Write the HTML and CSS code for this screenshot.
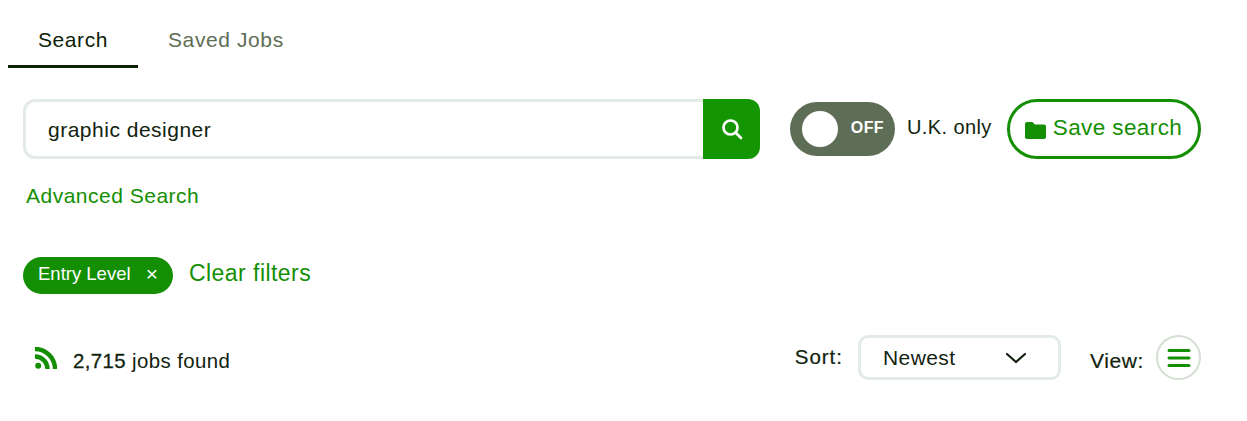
FILE: index.html
```html
<!DOCTYPE html>
<html lang="en">
<head>
    <meta charset="UTF-8">
    <title>Job Search</title>
    <link rel="stylesheet" href="styles.css">
</head>
<body>

    <!-- Tabs -->
    <nav class="tabs">
        <a class="tab active">Search</a>
        <a class="tab">Saved Jobs</a>
    </nav>

    <!-- Search row -->
    <div class="search-row">
        <div class="search-box">
            <div class="search-input">graphic designer</div>
            <button class="search-btn">
                <svg width="24" height="24" viewBox="0 0 24 24" fill="none" stroke="#fff" stroke-width="2.700" stroke-linecap="round">
                    <circle cx="10.5" cy="10.5" r="7"/>
                    <path d="M15.8 15.8 21 21"/>
                </svg>
            </button>
        </div>
        <div class="toggle">
            <span class="knob"></span>
            <span class="toggle-label">OFF</span>
        </div>
        <span class="toggle-text">U.K. only</span>
        <button class="save-btn">
            <svg width="21" height="17" viewBox="0 0 21 17" fill="#148f04">
                <path d="M0 2C0 .9.9 0 2 0h5.500l2.500 2.500h9c1.100 0 2 .9 2 2V15c0 1.100-.9 2-2 2H2c-1.100 0-2-.9-2-2z"/>
            </svg>
            <span class="save-text">Save search</span>
        </button>
    </div>

    <a class="advanced">Advanced Search</a>

    <!-- Filters -->
    <div class="filters">
        <span class="chip">Entry Level <span class="chip-x">×</span></span>
        <a class="clear">Clear filters</a>
    </div>

    <!-- Results bar -->
    <div class="results">
        <div class="found">
            <svg width="22" height="22" viewBox="0 0 22 22" fill="none" stroke="#148f04" stroke-width="4.400">
                <circle cx="3.200" cy="18.800" r="3" fill="#148f04" stroke="none"/>
                <path d="M0 9.500a12.500 12.500 0 0 1 12.500 12.500"/>
                <path d="M0 2a20 20 0 0 1 20 20"/>
            </svg>
            <span class="found-text"><b>2,715</b> jobs found</span>
        </div>
        <div class="sort">
            <span class="sort-label">Sort:</span>
            <div class="select">
                Newest
                <svg width="24" height="14" viewBox="0 0 24 14" fill="none" stroke="#12230f" stroke-width="2.200" stroke-linecap="round">
                    <path d="M3 3l9 8 9-8"/>
                </svg>
            </div>
            <span class="view-label">View:</span>
            <div class="view-btn">
                <svg width="24" height="20" viewBox="0 0 24 20" fill="none" stroke="#148f04" stroke-width="3" stroke-linecap="round">
                    <path d="M2 2.500h20M2 10h20M2 17.500h20"/>
                </svg>
            </div>
        </div>
    </div>

</body>
</html>
```

FILE: styles.css
```css
/* Page */
body {
    margin: 0;
    padding: 0 46px 0 8px;
    background-color: #fff;
    color: #12230f;
    font-family: 'Liberation Sans', Arial, sans-serif;
    font-size: 20px;
    letter-spacing: 0.4px;
}

a {
    cursor: pointer;
}

/* Tabs */
.tabs {
    display: flex;
    padding-top: 12px;
}

.tab {
    width: 130px;
    height: 53px;
    line-height: 56px;
    text-align: center;
    font-size: 21px;
    letter-spacing: 0.6px;
    color: #5e6d55;
}

.tab.active {
    color: #0d2106;
    border-bottom: 3px solid #0d2106;
}

.tab + .tab {
    margin-left: 30px;
    width: auto;
}

/* Search row */
.search-row {
    display: flex;
    align-items: center;
    margin: 31px 0 0 15px;
}

.search-box {
    display: flex;
    width: 737px;
    height: 60px;
}

.search-input {
    flex: 1;
    box-sizing: border-box;
    padding-left: 22px;
    line-height: 56px;
    font-size: 21px;
    letter-spacing: 0.5px;
    border: 3px solid #e4ebe6;
    border-right: 0;
    border-radius: 12px 0 0 12px;
}

.search-btn {
    width: 57px;
    padding: 3px 0 0;
    border: 0;
    border-radius: 0 12px 12px 0;
    background-color: #149603;
}

.toggle {
    display: flex;
    align-items: center;
    justify-content: space-between;
    box-sizing: border-box;
    width: 105px;
    height: 54px;
    margin-left: 30px;
    padding: 0 11px 0 12px;
    border-radius: 27px;
    background-color: #5e6d55;
}

.knob {
    width: 36px;
    height: 36px;
    border-radius: 50%;
    background-color: #fff;
}

.toggle-label {
    margin-top: -2px;
    font-size: 16px;
    font-weight: bold;
    color: #fff;
}

.toggle-text {
    margin: -4px 15px 0 12px;
}

.save-btn {
    display: flex;
    align-items: center;
    gap: 7px;
    box-sizing: border-box;
    width: 194px;
    height: 60px;
    padding: 0 0 0 15px;
    border: 3px solid #148f04;
    border-radius: 30px;
    background-color: #fff;
    color: #148f04;
    font-family: inherit;
    font-size: 22.5px;
    letter-spacing: 0.4px;
}

.save-btn svg {
    margin-top: 3px;
}

.save-text {
    margin-top: -2px;
}

.advanced {
    display: block;
    margin: 25px 0 0 18px;
    font-size: 21px;
    letter-spacing: 0.5px;
    color: #148f04;
}

/* Filters */
.filters {
    display: flex;
    align-items: center;
    gap: 16px;
    margin: 49px 0 0 15px;
}

.chip {
    box-sizing: border-box;
    width: 150px;
    height: 37px;
    padding-left: 15px;
    line-height: 33px;
    border-radius: 19px;
    background-color: #148f04;
    color: #fff;
    font-size: 18.500px;
    letter-spacing: 0;
}

.chip-x {
    position: relative;
    top: 1px;
    margin-left: 10px;
    font-size: 21px;
    line-height: 20px;
}

.clear {
    margin-top: -5px;
    color: #148f04;
    font-size: 23px;
    letter-spacing: 0.45px;
}

/* Results bar */
.results {
    display: flex;
    justify-content: space-between;
    align-items: center;
    margin-top: 41px;
}

.found {
    display: flex;
    align-items: center;
    gap: 16px;
    margin-left: 27px;
}

.found-text {
    margin-top: 7px;
    font-size: 20.400px;
}

.found-text b {
    font-weight: normal;
    -webkit-text-stroke: 0.3px #12230f;
}

.sort {
    display: flex;
    align-items: center;
}

.sort-label {
    margin-top: -2px;
    font-size: 20.500px;
    letter-spacing: 1px;
    -webkit-text-stroke: 0.2px #12230f;
}

.select {
    display: flex;
    align-items: center;
    justify-content: space-between;
    box-sizing: border-box;
    width: 203px;
    height: 45px;
    margin: 0 29px 0 15px;
    padding: 0 30px 0 22px;
    border: 3px solid #e4ebe6;
    border-radius: 10px;
    font-size: 21px;
}

.view-label {
    margin-top: 7px;
    font-size: 21px;
    letter-spacing: 0.6px;
    -webkit-text-stroke: 0.2px #12230f;
}

.view-btn {
    display: flex;
    align-items: center;
    justify-content: center;
    box-sizing: border-box;
    width: 45px;
    height: 45px;
    margin-left: 12px;
    border: 2px solid #d6dfd4;
    border-radius: 50%;
}
```
